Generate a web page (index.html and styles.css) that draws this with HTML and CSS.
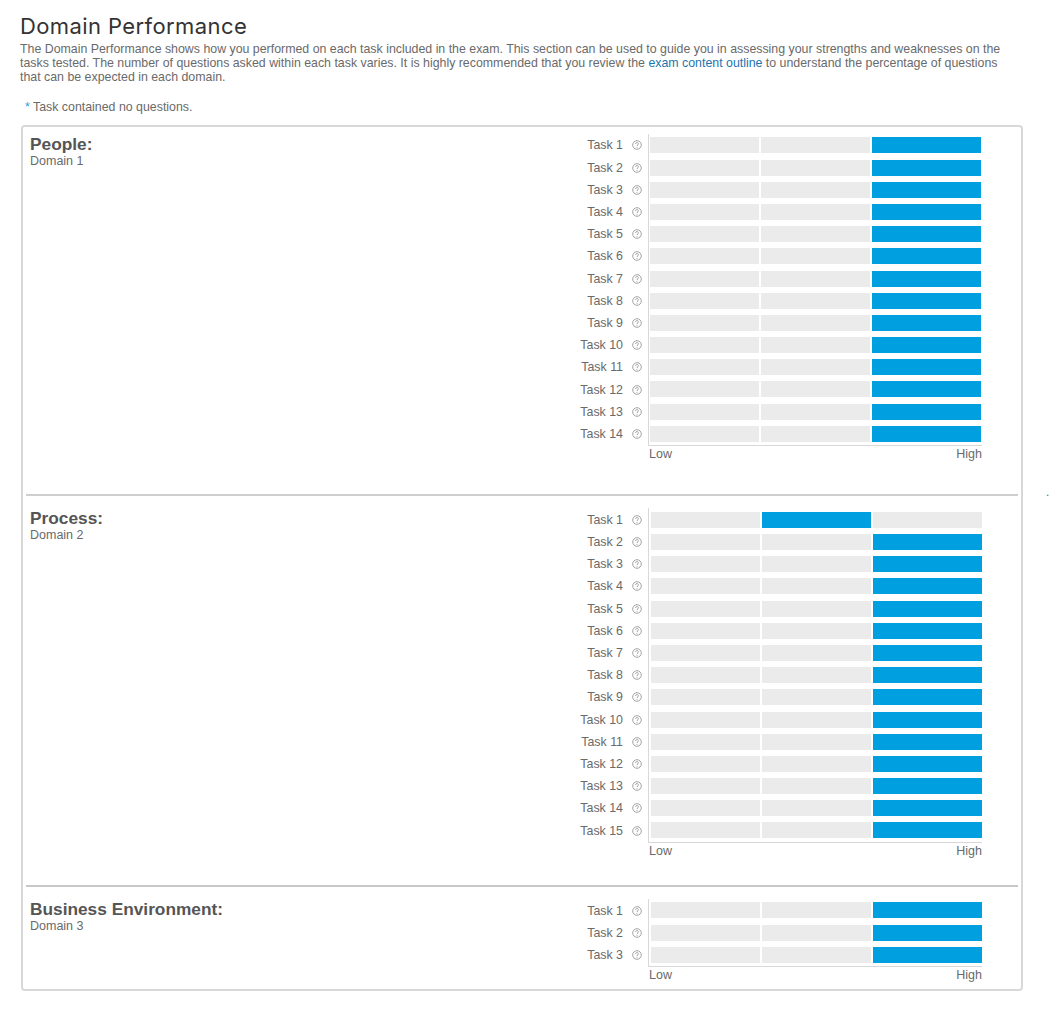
FILE: index.html
```html
<!DOCTYPE html>
<html lang="en">
<head>
<meta charset="utf-8">
<title>Domain Performance</title>
<link rel="stylesheet" href="styles.css">
</head>
<body>
<svg class="sprite" aria-hidden="true"><symbol id="q" viewBox="0 0 10 10"><circle cx="5" cy="5" r="4.3" fill="none" stroke="#8c8c8c" stroke-width=".8"/><path d="M3.6 4c0-1.9 2.8-1.9 2.8-.2C6.400 4.800 5 4.800 5 6" fill="none" stroke="#8c8c8c" stroke-width=".8"/><circle cx="5" cy="7.300" r=".5" fill="#8c8c8c"/></symbol></svg>
<main class="page">
<h1 class="title">Domain Performance</h1>
<p class="intro">The Domain Performance shows how you performed on each task included in the exam. This section can be used to guide you in assessing your strengths and weaknesses on the tasks tested. The number of questions asked within each task varies. It is highly recommended that you review the <a href="#">exam content outline</a> to understand the percentage of questions that can be expected in each domain.</p>
<p class="note"><span class="star">*</span> Task contained no questions.</p>
<span class="dot">.</span>
<div class="card">

<section class="domain first">
<div class="head"><h2>People:</h2><p>Domain 1</p></div>
<div class="chart">
<div class="labels">
<div class="lab">Task 1<svg class="ic"><use href="#q"/></svg></div>
<div class="lab">Task 2<svg class="ic"><use href="#q"/></svg></div>
<div class="lab">Task 3<svg class="ic"><use href="#q"/></svg></div>
<div class="lab">Task 4<svg class="ic"><use href="#q"/></svg></div>
<div class="lab">Task 5<svg class="ic"><use href="#q"/></svg></div>
<div class="lab">Task 6<svg class="ic"><use href="#q"/></svg></div>
<div class="lab">Task 7<svg class="ic"><use href="#q"/></svg></div>
<div class="lab">Task 8<svg class="ic"><use href="#q"/></svg></div>
<div class="lab">Task 9<svg class="ic"><use href="#q"/></svg></div>
<div class="lab">Task 10<svg class="ic"><use href="#q"/></svg></div>
<div class="lab">Task 11<svg class="ic"><use href="#q"/></svg></div>
<div class="lab">Task 12<svg class="ic"><use href="#q"/></svg></div>
<div class="lab">Task 13<svg class="ic"><use href="#q"/></svg></div>
<div class="lab">Task 14<svg class="ic"><use href="#q"/></svg></div>
</div>
<div class="plot">
<div class="tracks">
<div class="bar"><i></i><i></i><i class="on"></i></div>
<div class="bar"><i></i><i></i><i class="on"></i></div>
<div class="bar"><i></i><i></i><i class="on"></i></div>
<div class="bar"><i></i><i></i><i class="on"></i></div>
<div class="bar"><i></i><i></i><i class="on"></i></div>
<div class="bar"><i></i><i></i><i class="on"></i></div>
<div class="bar"><i></i><i></i><i class="on"></i></div>
<div class="bar"><i></i><i></i><i class="on"></i></div>
<div class="bar"><i></i><i></i><i class="on"></i></div>
<div class="bar"><i></i><i></i><i class="on"></i></div>
<div class="bar"><i></i><i></i><i class="on"></i></div>
<div class="bar"><i></i><i></i><i class="on"></i></div>
<div class="bar"><i></i><i></i><i class="on"></i></div>
<div class="bar"><i></i><i></i><i class="on"></i></div>
</div>
<div class="axis"><span>Low</span><span>High</span></div>
</div>
</div>
</section>

<section class="domain second">
<div class="head"><h2>Process:</h2><p>Domain 2</p></div>
<div class="chart">
<div class="labels">
<div class="lab">Task 1<svg class="ic"><use href="#q"/></svg></div>
<div class="lab">Task 2<svg class="ic"><use href="#q"/></svg></div>
<div class="lab">Task 3<svg class="ic"><use href="#q"/></svg></div>
<div class="lab">Task 4<svg class="ic"><use href="#q"/></svg></div>
<div class="lab">Task 5<svg class="ic"><use href="#q"/></svg></div>
<div class="lab">Task 6<svg class="ic"><use href="#q"/></svg></div>
<div class="lab">Task 7<svg class="ic"><use href="#q"/></svg></div>
<div class="lab">Task 8<svg class="ic"><use href="#q"/></svg></div>
<div class="lab">Task 9<svg class="ic"><use href="#q"/></svg></div>
<div class="lab">Task 10<svg class="ic"><use href="#q"/></svg></div>
<div class="lab">Task 11<svg class="ic"><use href="#q"/></svg></div>
<div class="lab">Task 12<svg class="ic"><use href="#q"/></svg></div>
<div class="lab">Task 13<svg class="ic"><use href="#q"/></svg></div>
<div class="lab">Task 14<svg class="ic"><use href="#q"/></svg></div>
<div class="lab">Task 15<svg class="ic"><use href="#q"/></svg></div>
</div>
<div class="plot">
<div class="tracks">
<div class="bar"><i></i><i class="on"></i><i></i></div>
<div class="bar"><i></i><i></i><i class="on"></i></div>
<div class="bar"><i></i><i></i><i class="on"></i></div>
<div class="bar"><i></i><i></i><i class="on"></i></div>
<div class="bar"><i></i><i></i><i class="on"></i></div>
<div class="bar"><i></i><i></i><i class="on"></i></div>
<div class="bar"><i></i><i></i><i class="on"></i></div>
<div class="bar"><i></i><i></i><i class="on"></i></div>
<div class="bar"><i></i><i></i><i class="on"></i></div>
<div class="bar"><i></i><i></i><i class="on"></i></div>
<div class="bar"><i></i><i></i><i class="on"></i></div>
<div class="bar"><i></i><i></i><i class="on"></i></div>
<div class="bar"><i></i><i></i><i class="on"></i></div>
<div class="bar"><i></i><i></i><i class="on"></i></div>
<div class="bar"><i></i><i></i><i class="on"></i></div>
</div>
<div class="axis"><span>Low</span><span>High</span></div>
</div>
</div>
</section>

<section class="domain third">
<div class="head"><h2>Business Environment:</h2><p>Domain 3</p></div>
<div class="chart">
<div class="labels">
<div class="lab">Task 1<svg class="ic"><use href="#q"/></svg></div>
<div class="lab">Task 2<svg class="ic"><use href="#q"/></svg></div>
<div class="lab">Task 3<svg class="ic"><use href="#q"/></svg></div>
</div>
<div class="plot">
<div class="tracks">
<div class="bar"><i></i><i></i><i class="on"></i></div>
<div class="bar"><i></i><i></i><i class="on"></i></div>
<div class="bar"><i></i><i></i><i class="on"></i></div>
</div>
<div class="axis"><span>Low</span><span>High</span></div>
</div>
</div>
</section>

</div>
</main>
</body>
</html>
```

FILE: styles.css
```css
* { box-sizing: border-box; }
html, body { margin: 0; padding: 0; background: #fff; }
body { font-family: "Liberation Sans", Arial, sans-serif; color: #6a6a6a; overflow: hidden; }
.sprite { display: none; }
.page { position: relative; padding: 13px 41px 0 20px; width: 1063px; }
.title { margin: 0; font-family: Inter, sans-serif; font-weight: 400; font-size: 22px; line-height: 26px; color: #333; letter-spacing: .4px; }
.intro { margin: 3px 0 0; width: 985px; font-size: 12.37px; line-height: 14px; }
.intro a { color: #1b75ae; text-decoration: none; }
.note { margin: 16px 0 0 5px; font-size: 12.36px; line-height: 14px; }
.star { color: #2a9fd8; }
.dot { position: absolute; left: 1046px; top: 485px; font-size: 12px; line-height: 14px; }
.card { margin: 11px 0 0 1px; width: 1002px; border: 2px solid #d8d8d8; border-radius: 4px; padding: 0 3px; }
.domain { display: flex; justify-content: space-between; padding-left: 4px; }
.first { padding-top: 7px; padding-bottom: 33px; border-bottom: 2px solid #cfcfcf; }
.second { padding-top: 12px; padding-bottom: 27px; border-bottom: 2px solid #c8c8c8; }
.third { padding-top: 12px; padding-bottom: 7px; }
.head h2 { margin: 0; font-size: 17.3px; line-height: 20px; color: #555; }
.head p { margin: 0; padding-top: .5px; font-size: 12.5px; line-height: 13px; }
.chart { display: flex; margin-right: 36px; }
.labels { display: flex; flex-direction: column; padding-top: .4px; }
.lab { display: flex; align-items: center; justify-content: flex-end; height: 22.2px; font-size: 12.4px; }
.ic { width: 10px; height: 10px; margin: 0 6px 0 9px; }
.plot { width: 334px; }
.tracks { border-left: 1px solid #d8d8d8; border-bottom: 1px solid #d8d8d8; padding: 3.4px 0 0 2px; }
.first .tracks { padding-left: 1px; }
.bar { display: grid; grid-template-columns: 108.7px 108.7px 108.7px; column-gap: 2.5px; height: 22.2px; }
.bar:last-child { height: 19.6px; }
.bar i { display: block; height: 16px; background: #ebebeb; }
.bar i.on { background: #009fdf; }
.axis { display: flex; justify-content: space-between; padding: 1px 0 0 1px; width: 334px; font-size: 12.5px; line-height: 14px; }
```
